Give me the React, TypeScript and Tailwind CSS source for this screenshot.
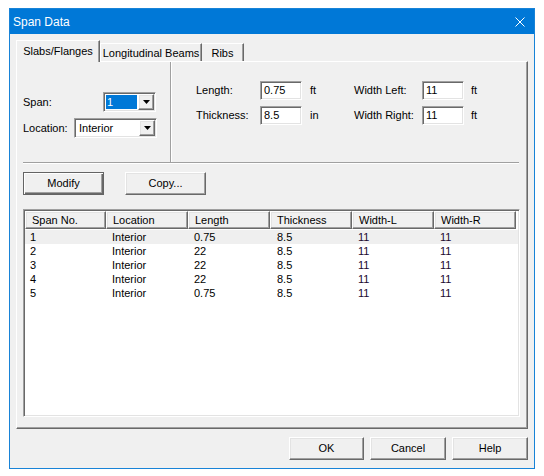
import React from 'react'

const font = { fontFamily: '"Liberation Sans", Arial, sans-serif' }

const sunken =
  'border border-t-[#a0a0a0] border-l-[#a0a0a0] border-b-white border-r-white shadow-[inset_1px_1px_0_#696969,inset_-1px_-1px_0_#e3e3e3] bg-white'

const raised =
  'border border-t-white border-l-white border-r-[#696969] border-b-[#696969] shadow-[inset_-1px_-1px_0_#a0a0a0,inset_1px_1px_0_#e3e3e3]'

type Row = {
  span: string
  location: string
  length: string
  thickness: string
  widthL: string
  widthR: string
}

const rows: Row[] = [
  { span: '1', location: 'Interior', length: '0.75', thickness: '8.5', widthL: '11', widthR: '11' },
  { span: '2', location: 'Interior', length: '22', thickness: '8.5', widthL: '11', widthR: '11' },
  { span: '3', location: 'Interior', length: '22', thickness: '8.5', widthL: '11', widthR: '11' },
  { span: '4', location: 'Interior', length: '22', thickness: '8.5', widthL: '11', widthR: '11' },
  { span: '5', location: 'Interior', length: '0.75', thickness: '8.5', widthL: '11', widthR: '11' },
]

const columns = ['Span No.', 'Location', 'Length', 'Thickness', 'Width-L', 'Width-R']

function DropButton() {
  return (
    <div className={`w-[16px] h-full flex items-center justify-center bg-[#f0f0f0] ${raised}`}>
      <svg width="7" height="4" viewBox="0 0 7 4">
        <polygon points="0,0 7,0 3.5,4" fill="#000" />
      </svg>
    </div>
  )
}

function Button({ label, primary }: { label: string; primary?: boolean }) {
  const cls = primary
    ? 'border border-[#646464] shadow-[inset_1px_1px_0_#fff,inset_-1px_-1px_0_#696969,inset_-2px_-2px_0_#a0a0a0]'
    : raised
  return (
    <button className={`w-full h-[23px] bg-[#f0f0f0] text-[11px] text-black flex items-center justify-center ${cls}`}>
      {label}
    </button>
  )
}

function Field({ value }: { value: string }) {
  return (
    <div className={`w-[42px] h-[19px] pl-[3px] flex items-center text-[11px] ${sunken}`}>
      {value}
    </div>
  )
}

export default function App() {
  return (
    <div className="w-[544px] h-[476px] bg-white pt-[8px] pl-[9px]" style={font}>
      <div className="w-[526px] h-[461px] border border-[#1883d7] bg-[#f0f0f0] flex flex-col">
        <div className="h-[25px] bg-[#0078d7] text-white flex items-center justify-between pl-[3px] pr-[9px]">
          <span className="text-[12px]">Span Data</span>
          <svg width="10" height="10" viewBox="0 0 10 10">
            <path d="M0.5 0.5 L9.5 9.5 M9.5 0.5 L0.5 9.5" stroke="#fff" strokeWidth="1" />
          </svg>
        </div>

        <div className="flex-1 px-[6px] pt-[7px] flex flex-col text-[11px] text-black">
          {/* tabs */}
          <div className="flex items-end h-[20px]">
            <div className="relative z-10 -mb-px w-[84px] h-[22px] bg-[#f0f0f0] border border-t-white border-l-white border-b-0 border-r-[#696969] shadow-[inset_-1px_0_0_#a0a0a0] flex items-center justify-center">
              Slabs/Flanges
            </div>
            <div className="w-[102px] h-[18px] border border-t-white border-l-white border-b-0 border-r-[#696969] shadow-[inset_-1px_0_0_#a0a0a0] flex items-center justify-center pt-[1px]">
              Longitudinal Beams
            </div>
            <div className="w-[42px] h-[18px] border border-t-white border-l-0 border-b-0 border-r-[#696969] shadow-[inset_-1px_0_0_#a0a0a0] flex items-center justify-center pt-[1px]">
              Ribs
            </div>
          </div>

          {/* panel */}
          <div className="w-[512px] h-[368px] border border-t-white border-l-white border-r-[#696969] border-b-[#696969] shadow-[inset_-1px_-1px_0_#a0a0a0] flex flex-col">
            <div className="flex h-[100px]">
              <div className="w-[154px] border-r border-r-[#a0a0a0] pt-[30px] pl-[6px] flex flex-col gap-[6px]">
                <div className="flex items-center">
                  <span className="w-[80px]">Span:</span>
                  <div className={`w-[53px] h-[20px] flex p-[1px] ${sunken}`}>
                    <div className="flex-1 p-[1px]">
                      <div className="h-full bg-[#0078d7] text-white pl-[1px] flex items-center">1</div>
                    </div>
                    <DropButton />
                  </div>
                </div>
                <div className="flex items-center">
                  <span className="w-[51px]">Location:</span>
                  <div className={`w-[83px] h-[20px] flex p-[1px] ${sunken}`}>
                    <div className="flex-1 pl-[3px] flex items-center">Interior</div>
                    <DropButton />
                  </div>
                </div>
              </div>
              <div className="flex-1 border-l border-l-white pl-[24px] pt-[19px]">
                <div className="grid grid-cols-[64px_42px_52px_68px_42px_20px] gap-y-[6px] items-center">
                  <span>Length:</span>
                  <Field value="0.75" />
                  <span className="pl-[8px]">ft</span>
                  <span>Width Left:</span>
                  <Field value="11" />
                  <span className="pl-[7px]">ft</span>
                  <span>Thickness:</span>
                  <Field value="8.5" />
                  <span className="pl-[8px]">in</span>
                  <span>Width Right:</span>
                  <Field value="11" />
                  <span className="pl-[7px]">ft</span>
                </div>
              </div>
            </div>
            <div className="ml-[6px] mr-[8px] border-t border-t-[#a0a0a0] border-b border-b-white" />

            <div className="flex gap-[21px] pl-[6px] mt-[8px]">
              <div className="w-[81px]">
                <Button label="Modify" primary />
              </div>
              <div className="w-[81px]">
                <Button label="Copy..." />
              </div>
            </div>

            <div className={`ml-[6px] mt-[14px] w-[497px] h-[208px] p-[1px] ${sunken}`}>
              <div className="grid grid-cols-[81px_82px_82px_82px_82px_82px]">
                {columns.map((c) => (
                  <div key={c} className={`h-[18px] bg-[#f0f0f0] pl-[6px] flex items-center ${raised}`}>
                    {c}
                  </div>
                ))}
              </div>
              <div className="flex flex-col pt-[1px]">
                {rows.map((r, i) => (
                  <div
                    key={r.span}
                    className={`grid grid-cols-[81px_82px_82px_82px_82px_82px] h-[14px] leading-[14px] ${
                      i === 0 ? 'bg-[#efefef]' : ''
                    }`}
                  >
                    <span className="pl-[5px]">{r.span}</span>
                    <span className="pl-[6px]">{r.location}</span>
                    <span className="pl-[6px]">{r.length}</span>
                    <span className="pl-[7px]">{r.thickness}</span>
                    <span className="pl-[6px] text-[#20082e]">{r.widthL}</span>
                    <span className="pl-[6px] text-[#20082e]">{r.widthR}</span>
                  </div>
                ))}
              </div>
            </div>
          </div>

          {/* bottom buttons */}
          <div className="flex justify-end gap-[6px] mt-[8px]">
            <div className="w-[75px]">
              <Button label="OK" />
            </div>
            <div className="w-[76px]">
              <Button label="Cancel" />
            </div>
            <div className="w-[76px]">
              <Button label="Help" />
            </div>
          </div>
        </div>
      </div>
    </div>
  )
}
